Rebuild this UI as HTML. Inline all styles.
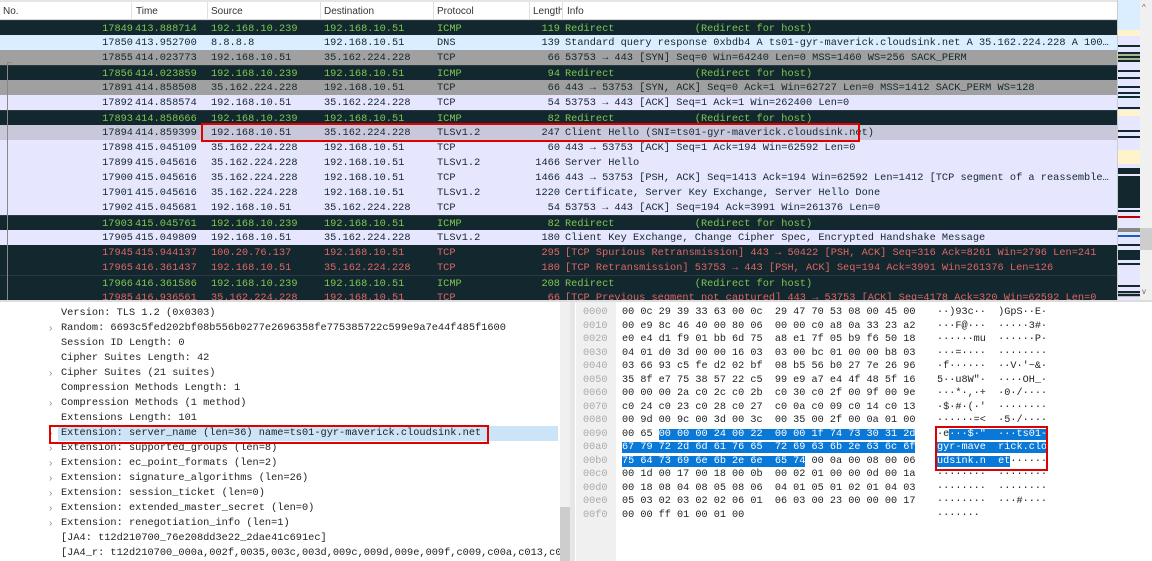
<!DOCTYPE html>
<html><head><meta charset="utf-8"><style>
*{margin:0;padding:0;box-sizing:border-box}
body{width:1152px;height:561px;overflow:hidden;background:#fff;position:relative;font-family:"Liberation Mono",monospace;font-size:10.3px}
.hdr{position:absolute;left:0;top:0;width:1117px;height:20px;background:#fff;border-top:2px solid #e5e5e5;border-bottom:1px solid #d8d8d8;font-family:"Liberation Sans",sans-serif;font-size:10px;color:#333}
.hdr span{position:absolute;top:4px}
.hdr i{position:absolute;top:0;height:19px;width:1px;background:#e0e0e0}
.r{position:absolute;left:0;width:1117px;height:15px;line-height:16px;white-space:pre;overflow:hidden}
.r span{position:absolute;top:0}
.n{left:60px;width:73px;text-align:right}
.t{left:135px}.s{left:211px}.d{left:324px}.p{left:437px}
.l{left:520px;width:40px;text-align:right}.i{left:565px}
.dk{background:#12272e;color:#7ec850;border-top:1px solid #2a3a40}
.dr{background:#12272e;color:#e06666}
.lb{background:#dbeeff;color:#12272e}
.gy{background:#a0a0a0;color:#12272e}
.lv{background:#e7e6ff;color:#12272e}
.sel{background:#c9c8da;color:#12272e}
.box{position:absolute;border:2px solid #e00000}
.dl{position:absolute;left:61px;white-space:pre;color:#222;height:15px;line-height:15px}
.ar{position:absolute;left:49px;color:#888;font-family:"Liberation Sans",sans-serif;font-size:10px;height:15px;line-height:15px}
.hx{position:absolute;left:622px;white-space:pre;color:#222;line-height:13.5px;font-size:10.2px}
.of{position:absolute;left:583px;white-space:pre;color:#aaa;line-height:13.5px;font-size:10.2px}
.as{position:absolute;left:937px;white-space:pre;color:#222;line-height:13.5px;font-size:10.2px}
.b{background:#0a78d7;color:#fff}
</style></head><body>
<div class="hdr">
<span style="left:3px">No.</span><i style="left:131px"></i>
<span style="left:136px">Time</span><i style="left:207px"></i>
<span style="left:211px">Source</span><i style="left:320px"></i>
<span style="left:324px">Destination</span><i style="left:433px"></i>
<span style="left:437px">Protocol</span><i style="left:529px"></i>
<span style="left:533px">Length</span><i style="left:562px"></i>
<span style="left:567px">Info</span>
</div>

<div class="r dk" style="top:20px"><span class="n">17849</span><span class="t">413.888714</span><span class="s">192.168.10.239</span><span class="d">192.168.10.51</span><span class="p">ICMP</span><span class="l">119</span><span class="i">Redirect             (Redirect for host)</span></div>
<div class="r lb" style="top:35px"><span class="n">17850</span><span class="t">413.952700</span><span class="s">8.8.8.8</span><span class="d">192.168.10.51</span><span class="p">DNS</span><span class="l">139</span><span class="i">Standard query response 0xbdb4 A ts01-gyr-maverick.cloudsink.net A 35.162.224.228 A 100…</span></div>
<div class="r gy" style="top:50px"><span class="n">17855</span><span class="t">414.023773</span><span class="s">192.168.10.51</span><span class="d">35.162.224.228</span><span class="p">TCP</span><span class="l">66</span><span class="i">53753 → 443 [SYN] Seq=0 Win=64240 Len=0 MSS=1460 WS=256 SACK_PERM</span></div>
<div class="r dk" style="top:65px"><span class="n">17856</span><span class="t">414.023859</span><span class="s">192.168.10.239</span><span class="d">192.168.10.51</span><span class="p">ICMP</span><span class="l">94</span><span class="i">Redirect             (Redirect for host)</span></div>
<div class="r gy" style="top:80px"><span class="n">17891</span><span class="t">414.858508</span><span class="s">35.162.224.228</span><span class="d">192.168.10.51</span><span class="p">TCP</span><span class="l">66</span><span class="i">443 → 53753 [SYN, ACK] Seq=0 Ack=1 Win=62727 Len=0 MSS=1412 SACK_PERM WS=128</span></div>
<div class="r lv" style="top:95px"><span class="n">17892</span><span class="t">414.858574</span><span class="s">192.168.10.51</span><span class="d">35.162.224.228</span><span class="p">TCP</span><span class="l">54</span><span class="i">53753 → 443 [ACK] Seq=1 Ack=1 Win=262400 Len=0</span></div>
<div class="r dk" style="top:110px"><span class="n">17893</span><span class="t">414.858666</span><span class="s">192.168.10.239</span><span class="d">192.168.10.51</span><span class="p">ICMP</span><span class="l">82</span><span class="i">Redirect             (Redirect for host)</span></div>
<div class="r sel" style="top:125px"><span class="n">17894</span><span class="t">414.859399</span><span class="s">192.168.10.51</span><span class="d">35.162.224.228</span><span class="p">TLSv1.2</span><span class="l">247</span><span class="i">Client Hello (SNI=ts01-gyr-maverick.cloudsink.net)</span></div>
<div class="r lv" style="top:140px"><span class="n">17898</span><span class="t">415.045109</span><span class="s">35.162.224.228</span><span class="d">192.168.10.51</span><span class="p">TCP</span><span class="l">60</span><span class="i">443 → 53753 [ACK] Seq=1 Ack=194 Win=62592 Len=0</span></div>
<div class="r lv" style="top:155px"><span class="n">17899</span><span class="t">415.045616</span><span class="s">35.162.224.228</span><span class="d">192.168.10.51</span><span class="p">TLSv1.2</span><span class="l">1466</span><span class="i">Server Hello</span></div>
<div class="r lv" style="top:170px"><span class="n">17900</span><span class="t">415.045616</span><span class="s">35.162.224.228</span><span class="d">192.168.10.51</span><span class="p">TCP</span><span class="l">1466</span><span class="i">443 → 53753 [PSH, ACK] Seq=1413 Ack=194 Win=62592 Len=1412 [TCP segment of a reassemble…</span></div>
<div class="r lv" style="top:185px"><span class="n">17901</span><span class="t">415.045616</span><span class="s">35.162.224.228</span><span class="d">192.168.10.51</span><span class="p">TLSv1.2</span><span class="l">1220</span><span class="i">Certificate, Server Key Exchange, Server Hello Done</span></div>
<div class="r lv" style="top:200px"><span class="n">17902</span><span class="t">415.045681</span><span class="s">192.168.10.51</span><span class="d">35.162.224.228</span><span class="p">TCP</span><span class="l">54</span><span class="i">53753 → 443 [ACK] Seq=194 Ack=3991 Win=261376 Len=0</span></div>
<div class="r dk" style="top:215px"><span class="n">17903</span><span class="t">415.045761</span><span class="s">192.168.10.239</span><span class="d">192.168.10.51</span><span class="p">ICMP</span><span class="l">82</span><span class="i">Redirect             (Redirect for host)</span></div>
<div class="r lv" style="top:230px"><span class="n">17905</span><span class="t">415.049809</span><span class="s">192.168.10.51</span><span class="d">35.162.224.228</span><span class="p">TLSv1.2</span><span class="l">180</span><span class="i">Client Key Exchange, Change Cipher Spec, Encrypted Handshake Message</span></div>
<div class="r dr" style="top:245px"><span class="n">17945</span><span class="t">415.944137</span><span class="s">100.20.76.137</span><span class="d">192.168.10.51</span><span class="p">TCP</span><span class="l">295</span><span class="i">[TCP Spurious Retransmission] 443 → 50422 [PSH, ACK] Seq=316 Ack=8261 Win=2796 Len=241</span></div>
<div class="r dr" style="top:260px"><span class="n">17965</span><span class="t">416.361437</span><span class="s">192.168.10.51</span><span class="d">35.162.224.228</span><span class="p">TCP</span><span class="l">180</span><span class="i">[TCP Retransmission] 53753 → 443 [PSH, ACK] Seq=194 Ack=3991 Win=261376 Len=126</span></div>
<div class="r dk" style="top:275px"><span class="n">17966</span><span class="t">416.361586</span><span class="s">192.168.10.239</span><span class="d">192.168.10.51</span><span class="p">ICMP</span><span class="l">208</span><span class="i">Redirect             (Redirect for host)</span></div>
<div class="r dr" style="top:290px;height:11px"><span class="n">17985</span><span class="t">416.936561</span><span class="s">35.162.224.228</span><span class="d">192.168.10.51</span><span class="p">TCP</span><span class="l">66</span><span class="i">[TCP Previous segment not captured] 443 → 53753 [ACK] Seq=4178 Ack=320 Win=62592 Len=0</span></div>
<div style="position:absolute;left:7px;top:62px;width:1px;height:240px;background:#888"></div>
<div style="position:absolute;left:7px;top:62px;width:5px;height:1px;background:#888"></div>
<div class="box" style="left:201px;top:123px;width:659px;height:19px"></div>

<!-- minimap -->
<div style="position:absolute;left:1117px;top:0;width:23px;height:301px;background:#e7e6ff;border-left:1px solid #ccc">
<div style="position:absolute;left:0;top:0;width:100%;height:30px;background:#dbeeff"></div>
<div style="position:absolute;left:0;top:30px;width:100%;height:6px;background:#fff3cc"></div>
<div style="position:absolute;left:0;top:45px;width:100%;height:2px;background:#12272e"></div>
<div style="position:absolute;left:0;top:52px;width:100%;height:10px;background:repeating-linear-gradient(#12272e 0 2px,#a8b88c 2px 4px)"></div>
<div style="position:absolute;left:0;top:70px;width:100%;height:2px;background:#12272e"></div>
<div style="position:absolute;left:0;top:77px;width:100%;height:2px;background:#12272e"></div>
<div style="position:absolute;left:0;top:86px;width:100%;height:2px;background:#12272e"></div>
<div style="position:absolute;left:0;top:92px;width:100%;height:8px;background:repeating-linear-gradient(#12272e 0 2px,#dbeeff 2px 4px)"></div>
<div style="position:absolute;left:0;top:107px;width:100%;height:2px;background:#12272e"></div>
<div style="position:absolute;left:0;top:110px;width:100%;height:6px;background:#fff3cc"></div>
<div style="position:absolute;left:0;top:130px;width:100%;height:2px;background:#12272e"></div>
<div style="position:absolute;left:0;top:136px;width:100%;height:2px;background:#12272e"></div>
<div style="position:absolute;left:0;top:150px;width:100%;height:14px;background:#fff3cc"></div>
<div style="position:absolute;left:0;top:168px;width:100%;height:6px;background:#12272e"></div>
<div style="position:absolute;left:0;top:176px;width:100%;height:32px;background:#12272e"></div>
<div style="position:absolute;left:0;top:210px;width:100%;height:2px;background:#12272e"></div>
<div style="position:absolute;left:0;top:216px;width:100%;height:2px;background:#b00"></div>
<div style="position:absolute;left:0;top:228px;width:100%;height:4px;background:#888"></div>
<div style="position:absolute;left:0;top:235px;width:100%;height:2px;background:#1060c0"></div>
<div style="position:absolute;left:0;top:244px;width:100%;height:2px;background:#12272e"></div>
<div style="position:absolute;left:0;top:250px;width:100%;height:10px;background:#12272e"></div>
<div style="position:absolute;left:0;top:263px;width:100%;height:2px;background:#12272e"></div>
<div style="position:absolute;left:0;top:285px;width:100%;height:2px;background:#12272e"></div>
<div style="position:absolute;left:0;top:291px;width:100%;height:6px;background:repeating-linear-gradient(#12272e 0 2px,#bbb 2px 3px)"></div>
</div>
<div style="position:absolute;left:1140px;top:0;width:12px;height:301px;background:#f0f0f0">
<div style="position:absolute;left:0;top:228px;width:12px;height:22px;background:#cdcdcd"></div>
<div style="position:absolute;left:2px;top:3px;font-size:8px;color:#666;font-family:'Liberation Sans',sans-serif">^</div>
<div style="position:absolute;left:2px;top:287px;font-size:8px;color:#666;font-family:'Liberation Sans',sans-serif">v</div>
</div>
<div style="position:absolute;left:0;top:300px;width:1152px;height:2px;background:#ddd"></div>

<!-- detail pane -->
<div style="position:absolute;left:58px;top:426px;width:500px;height:15px;background:#cce4f7"></div>
<div class="dl" style="top:306px">Version: TLS 1.2 (0x0303)</div>
<div class="ar" style="top:321px">›</div><div class="dl" style="top:321px">Random: 6693c5fed202bf08b556b0277e2696358fe775385722c599e9a7e44f485f1600</div>
<div class="dl" style="top:336px">Session ID Length: 0</div>
<div class="dl" style="top:351px">Cipher Suites Length: 42</div>
<div class="ar" style="top:366px">›</div><div class="dl" style="top:366px">Cipher Suites (21 suites)</div>
<div class="dl" style="top:381px">Compression Methods Length: 1</div>
<div class="ar" style="top:396px">›</div><div class="dl" style="top:396px">Compression Methods (1 method)</div>
<div class="dl" style="top:411px">Extensions Length: 101</div>
<div class="ar" style="top:426px">›</div><div class="dl" style="top:426px">Extension: server_name (len=36) name=ts01-gyr-maverick.cloudsink.net</div>
<div class="ar" style="top:441px">›</div><div class="dl" style="top:441px">Extension: supported_groups (len=8)</div>
<div class="ar" style="top:456px">›</div><div class="dl" style="top:456px">Extension: ec_point_formats (len=2)</div>
<div class="ar" style="top:471px">›</div><div class="dl" style="top:471px">Extension: signature_algorithms (len=26)</div>
<div class="ar" style="top:486px">›</div><div class="dl" style="top:486px">Extension: session_ticket (len=0)</div>
<div class="ar" style="top:501px">›</div><div class="dl" style="top:501px">Extension: extended_master_secret (len=0)</div>
<div class="ar" style="top:516px">›</div><div class="dl" style="top:516px">Extension: renegotiation_info (len=1)</div>
<div class="dl" style="top:531px">[JA4: t12d210700_76e208dd3e22_2dae41c691ec]</div>
<div class="dl" style="top:546px;width:500px;overflow:hidden">[JA4_r: t12d210700_000a,002f,0035,003c,003d,009c,009d,009e,009f,c009,c00a,c013,c014]</div>
<div class="box" style="left:49px;top:425px;width:440px;height:19px"></div>
<div style="position:absolute;left:560px;top:302px;width:10px;height:259px;background:#f0f0f0"><div style="position:absolute;top:205px;left:0;width:10px;height:54px;background:#cdcdcd"></div></div>
<div style="position:absolute;left:570px;top:302px;width:5px;height:259px;background:#e6e6e6"></div>

<!-- hex pane -->
<div style="position:absolute;left:576px;top:302px;width:40px;height:259px;background:#f0f0f0"></div>
<div class="of" style="top:306px">0000
0010
0020
0030
0040
0050
0060
0070
0080
0090
00a0
00b0
00c0
00d0
00e0
00f0</div>
<div class="hx" style="top:306px">00 0c 29 39 33 63 00 0c  29 47 70 53 08 00 45 00
00 e9 8c 46 40 00 80 06  00 00 c0 a8 0a 33 23 a2
e0 e4 d1 f9 01 bb 6d 75  a8 e1 7f 05 b9 f6 50 18
04 01 d0 3d 00 00 16 03  03 00 bc 01 00 00 b8 03
03 66 93 c5 fe d2 02 bf  08 b5 56 b0 27 7e 26 96
35 8f e7 75 38 57 22 c5  99 e9 a7 e4 4f 48 5f 16
00 00 00 2a c0 2c c0 2b  c0 30 c0 2f 00 9f 00 9e
c0 24 c0 23 c0 28 c0 27  c0 0a c0 09 c0 14 c0 13
00 9d 00 9c 00 3d 00 3c  00 35 00 2f 00 0a 01 00
00 65 <span class="b">00 00 00 24 00 22  00 00 1f 74 73 30 31 2d</span>
<span class="b">67 79 72 2d 6d 61 76 65  72 69 63 6b 2e 63 6c 6f</span>
<span class="b">75 64 73 69 6e 6b 2e 6e  65 74</span> 00 0a 00 08 00 06
00 1d 00 17 00 18 00 0b  00 02 01 00 00 0d 00 1a
00 18 08 04 08 05 08 06  04 01 05 01 02 01 04 03
05 03 02 03 02 02 06 01  06 03 00 23 00 00 00 17
00 00 ff 01 00 01 00</div>
<div class="as" style="top:306px">··)93c··  )GpS··E·
···F@···  ·····3#·
······mu  ······P·
···=····  ········
·f······  ··V·'~&·
5··u8W"·  ····OH_·
···*·,·+  ·0·/····
·$·#·(·'  ········
······=<  ·5·/····
·e<span class="b">···$·"  ···ts01-</span>
<span class="b">gyr-mave  rick.clo</span>
<span class="b">udsink.n  et</span>······
········  ········
········  ········
········  ···#····
·······</div>
<div class="box" style="left:935px;top:426px;width:113px;height:45px"></div>
</body></html>
